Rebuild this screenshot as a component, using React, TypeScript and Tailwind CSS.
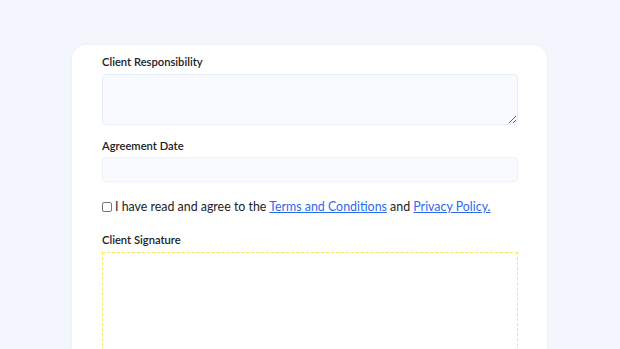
export default function App() {
  return (
    <div className="h-[349px] overflow-hidden bg-[#f3f6fd] font-['Lato',sans-serif] text-[#202124]">
      <div className="ml-[72px] mt-[45px] w-[475px] rounded-[14px] bg-white px-[30px] pt-[9px] pb-10 shadow-[0_0_3px_rgba(0,0,0,0.06)]">
        <label className="block text-[11.2px] font-semibold leading-[16px]">Client Responsibility</label>
        <textarea className="mt-[4px] block h-[51px] w-[416px] rounded-[4px] border border-[#e6edfb] bg-[#f8faff]" />

        <label className="mt-[13px] block text-[11.2px] font-semibold leading-[16px]">Agreement Date</label>
        <div className="mt-[3px] h-[25px] w-[416px] rounded-[4px] border border-[#edf1f8] bg-[#f8faff]" />

        <div className="mt-[16px] flex items-center gap-[3px] whitespace-nowrap text-[12.4px] leading-[18px]">
          <span className="inline-block h-[10px] w-[10px] shrink-0 rounded-[2px] border border-[#777]" />
          <span>
            I have read and agree to the{' '}
            <a className="text-[#2b6af0] underline">Terms and Conditions</a> and{' '}
            <a className="text-[#2b6af0] underline">Privacy Policy.</a>
          </span>
        </div>

        <label className="mt-[16px] block text-[11.2px] font-semibold leading-[16px]">Client Signature</label>
        <div className="mt-[4px] h-[140px] w-[416px] border border-dashed border-[#fbe35c]" />
      </div>
    </div>
  )
}
